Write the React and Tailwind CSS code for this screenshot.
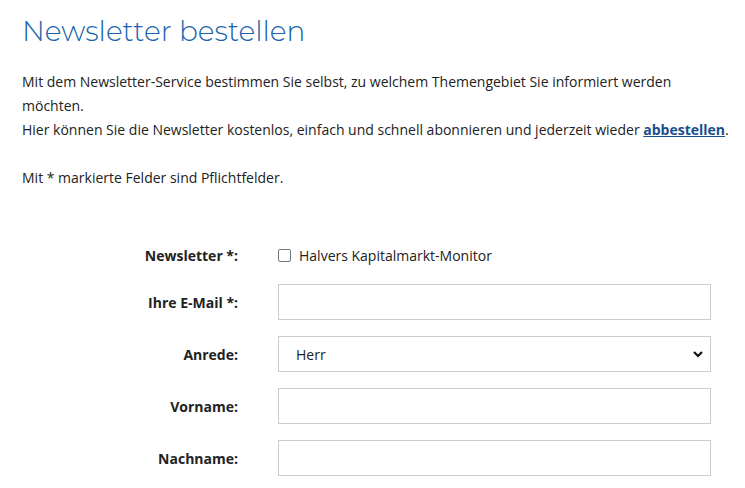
export default function App() {
  const font = { fontFamily: '"Open Sans", "Liberation Sans", sans-serif' };
  const Row = ({ label, children, h = "h-9" }) => (
    <div className={`flex items-center ${h}`}>
      <div className="w-[216px] text-right font-bold text-[14px] text-[#222]">{label}</div>
      <div className="ml-[40px] w-[433px] h-full flex items-center">{children}</div>
    </div>
  );
  return (
    <div className="w-[745px] h-[488px] bg-white overflow-hidden pl-[22px] pr-[14px]" style={font}>
      <h1 className="text-[28px] font-light text-[#1b64ad] pt-[9px] leading-[44px]" style={{ fontFamily: '"Montserrat", "Open Sans", sans-serif' }}>
        Newsletter bestellen
      </h1>
      <div className="mt-[17px] text-[14px] leading-[24px] text-[#222]">
        <p>
          Mit dem Newsletter-Service bestimmen Sie selbst, zu welchem Themengebiet Sie informiert werden möchten.
          <br />
          Hier können Sie die Newsletter kostenlos, einfach und schnell abonnieren und jederzeit wieder{" "}
          <a href="#" className="font-bold text-[#1a4f8f] underline">abbestellen</a>.
        </p>
        <p className="mt-[24px]">Mit * markierte Felder sind Pflichtfelder.</p>
      </div>
      <div className="mt-[53px] flex flex-col gap-4">
        <Row label="Newsletter *:" h="h-[25px]">
          <label className="flex items-center gap-2 text-[14px] text-[#222]">
            <span className="w-[13px] h-[13px] border border-[#767676] rounded-[2px] bg-white inline-block" />
            Halvers Kapitalmarkt-Monitor
          </label>
        </Row>
        <Row label="Ihre E-Mail *:">
          <div className="w-full h-full border border-[#cccccc] bg-white" />
        </Row>
        <Row label="Anrede:">
          <div className="w-full h-full border border-[#cccccc] bg-white flex items-center justify-between pl-[17px] pr-[6px] text-[14px] text-[#222]">
            <span>Herr</span>
            <svg width="12" height="12" viewBox="0 0 12 12">
              <path d="M2 4 L6 8 L10 4" fill="none" stroke="#111" strokeWidth="2.2" />
            </svg>
          </div>
        </Row>
        <Row label="Vorname:">
          <div className="w-full h-full border border-[#cccccc] bg-white" />
        </Row>
        <Row label="Nachname:">
          <div className="w-full h-full border border-[#cccccc] bg-white" />
        </Row>
      </div>
    </div>
  );
}
